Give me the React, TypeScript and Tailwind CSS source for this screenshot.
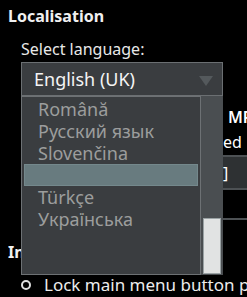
import React from "react";

const items = ["Română", "Русский язык", "Slovenčina", "", "Türkçe", "Українська"];

export default function App() {
  return (
    <div className="relative w-[247px] h-[297px] overflow-hidden bg-black text-white font-['Noto_Sans',sans-serif]">
      <div className="pl-2 pt-[5px] text-[16px] leading-[22px] font-bold text-[#f0f0f0]">Localisation</div>
      <div className="pl-[21px] mt-[11px] text-[16px] leading-[22px] text-[#e8e8e8]">Select language:</div>
      <div className="ml-[21px] mt-[2px] w-[202px] h-[34px] border border-[#6b6f72] bg-[#3a3d40] flex items-center justify-between pl-[12px] pr-[9px]">
        <span className="text-[18px] leading-[22px] text-[#f4f4f4]">English (UK)</span>
        <svg width="14" height="10" viewBox="0 0 14 10" className="mt-[3px]"><polygon points="0,0 14,0 7,10" fill="#54595c" /></svg>
      </div>
      <div className="mt-[10px] pl-[228px] whitespace-nowrap text-[16px] leading-[22px] font-semibold">MPD</div>
      <div className="mt-[3px] pl-[223px] whitespace-nowrap text-[16px] leading-[22px]">ed</div>
      <div className="mt-[2px] ml-[120px] h-[35px] border-y-2 border-[#4d5154] bg-[#2e3133] flex items-center pl-[103px] text-[16px]">]</div>
      <div className="mt-[28px] ml-[120px] h-[2px] bg-[#4d5154]"></div>
      <div className="pl-2 mt-[21px] text-[16px] leading-[22px] font-bold text-[#f0f0f0]">Interface</div>
      <div className="pl-[21px] mt-[11px] flex items-center gap-[13px] whitespace-nowrap text-[17px] leading-[22px] text-[#ececec]">
        <span className="w-[10px] h-[10px] rounded-full border-[2.5px] border-[#e0e0e0] shrink-0"></span>
        <span>Lock main menu button position</span>
      </div>

      <div className="absolute left-[21px] top-[96px] w-[202px] h-[179px] flex">
        <div className="w-[180px] h-full border border-[#6d7174] bg-[#3a3d40] py-px px-[2px]">
          {items.map((t, i) => (
            <div
              key={i}
              className={
                "h-[22px] pl-[14px] text-[18px] leading-[22px] whitespace-nowrap text-[#9c9d9d] " +
                (t === "" ? "bg-[#687b7f] border border-[#74888c]" : "")
              }
            >
              {t}
            </div>
          ))}
        </div>
        <div className="w-[22px] h-full bg-[#4a4e51] flex flex-col justify-end px-[2px] pb-px">
          <div className="h-[56px] bg-[#e1e3e3] border border-[#9aa2a4]"></div>
        </div>
      </div>
    </div>
  );
}
